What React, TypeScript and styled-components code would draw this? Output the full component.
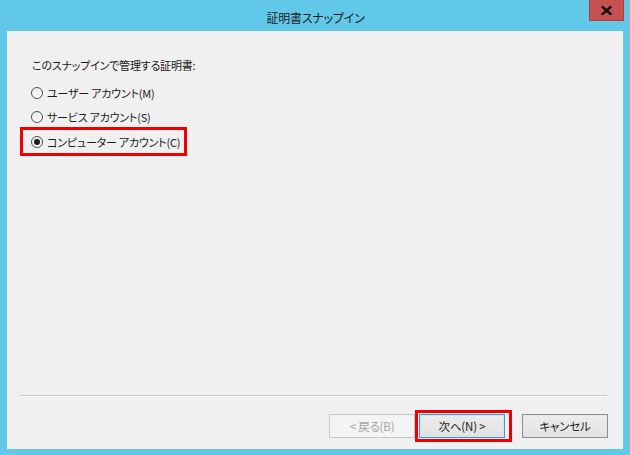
import styled, { createGlobalStyle } from "styled-components";

const GlobalStyle = createGlobalStyle`
  html, body {
    margin: 0;
    padding: 0;
    background: #62c8ea;
  }
  body {
    font-family: "Noto Sans CJK JP", "Noto Sans", sans-serif;
    font-feature-settings: "palt";
    color: #000;
  }
`;

const options = [
  { id: "user", label: "ユーザー アカウント(M)" },
  { id: "service", label: "サービス アカウント(S)" },
  { id: "computer", label: "コンピューター アカウント(C)" },
];

const App = () => {
  const selected = "computer";

  return (
    <>
      <GlobalStyle />
      <StyledWindow>
        <StyledTitleBar>
          <StyledTitle>証明書スナップイン</StyledTitle>
          <StyledCloseButton aria-label="閉じる">
            <svg width="11" height="9" viewBox="0 0 11 9">
              <path
                d="M1.5 1 L9.5 8 M9.5 1 L1.5 8"
                stroke="#111"
                strokeWidth="2.4"
                strokeLinecap="square"
              />
            </svg>
          </StyledCloseButton>
        </StyledTitleBar>
        <StyledClient>
          <StyledBody>
            <StyledLabel>このスナップインで管理する証明書:</StyledLabel>
            {options.map((option) => {
              const row = (
                <StyledOption key={option.id}>
                  <StyledRadio $checked={option.id === selected} />
                  <span>{option.label}</span>
                </StyledOption>
              );
              return option.id === selected ? (
                <StyledHighlight key={option.id}>{row}</StyledHighlight>
              ) : (
                row
              );
            })}
          </StyledBody>
          <StyledSeparator />
          <StyledButtonBar>
            <StyledButton disabled>&lt; 戻る(B)</StyledButton>
            <StyledButtonHighlight>
              <StyledButton $primary>次へ(N) &gt;</StyledButton>
            </StyledButtonHighlight>
            <StyledButton>キャンセル</StyledButton>
          </StyledButtonBar>
        </StyledClient>
      </StyledWindow>
    </>
  );
};

const StyledWindow = styled.div`
  width: 630px;
  height: 455px;
  display: flex;
  flex-direction: column;
  background-color: #62c8ea;
  padding: 0 7px 6px 7px;
  box-sizing: border-box;
`;

const StyledTitleBar = styled.div`
  position: relative;
  height: 31px;
  display: flex;
  align-items: center;
  justify-content: center;
  flex-shrink: 0;
`;

const StyledTitle = styled.div`
  font-size: 12px;
  letter-spacing: -0.2px;
  color: #1b1b1b;
  margin-top: 3px;
  margin-left: 1px;
`;

const StyledCloseButton = styled.div`
  position: absolute;
  top: 0;
  right: -1px;
  width: 35px;
  height: 21px;
  box-sizing: border-box;
  background-color: #c75050;
  border: 1px solid #a84040;
  border-top: none;
  display: flex;
  align-items: center;
  justify-content: center;
`;

const StyledClient = styled.div`
  flex: 1;
  display: flex;
  flex-direction: column;
  background-color: #f0f0f0;
`;

const StyledBody = styled.div`
  flex: 1;
  display: flex;
  flex-direction: column;
  align-items: flex-start;
  padding: 25px 0 0 24px;
`;

const StyledLabel = styled.div`
  font-size: 11px;
  letter-spacing: -0.2px;
  line-height: 18px;
  color: #1a1a1a;
  margin-left: 1px;
  margin-bottom: 7px;
`;

const StyledOption = styled.div`
  height: 24px;
  display: flex;
  align-items: center;
  gap: 4px;
  font-size: 11px;
  letter-spacing: -0.2px;
  color: #1a1a1a;
`;

const StyledRadio = styled.span<{ $checked?: boolean }>`
  width: 12px;
  height: 12px;
  box-sizing: border-box;
  border-radius: 50%;
  border: 1px solid #4d4d4d;
  background: linear-gradient(#ebebeb, #fdfdfd);
  display: flex;
  align-items: center;
  justify-content: center;

  &::after {
    content: "";
    display: ${(props) => (props.$checked ? "block" : "none")};
    width: 6px;
    height: 6px;
    border-radius: 50%;
    background-color: #1c1c1c;
  }
`;

const StyledHighlight = styled.div`
  margin: -2px 0 0 -11px;
  padding: 0 4px 0 8px;
  height: 29px;
  box-sizing: border-box;
  border: 3px solid #ee0000;
  display: flex;
  align-items: center;
`;

const StyledSeparator = styled.div`
  margin: 0 16px 0 12px;
  height: 1px;
  background-color: #cacaca;
  border-bottom: 1px solid #f8f8f8;
`;

const StyledButtonBar = styled.div`
  display: flex;
  justify-content: flex-end;
  align-items: center;
  padding: 13px 15px 7px 0;
`;

const StyledButtonHighlight = styled.div`
  margin: 0 10px 0 0;
  padding: 1px 4px 1px 1px;
  border: 3px solid #ee0000;
  display: flex;
`;

const StyledButton = styled.button<{ $primary?: boolean }>`
  width: 86px;
  height: 24px;
  padding: 0;
  font-family: "Noto Sans CJK JP", "Noto Sans", sans-serif;
  font-feature-settings: "palt";
  font-size: 11.5px;
  letter-spacing: -0.2px;
  color: #1a1a1a;
  background: linear-gradient(#ececec, #e2e2e2);
  border: 1px solid ${(props) => (props.$primary ? "#4f94c9" : "#8c8c8c")};
  box-shadow: ${(props) =>
    props.$primary ? "inset 0 0 0 1px #cfe3f3" : "none"};
  border-radius: 0;

  &:disabled {
    color: #a3a3a3;
    background: #f4f4f4;
    border-color: #c8c8c8;
  }
`;

export default App;
